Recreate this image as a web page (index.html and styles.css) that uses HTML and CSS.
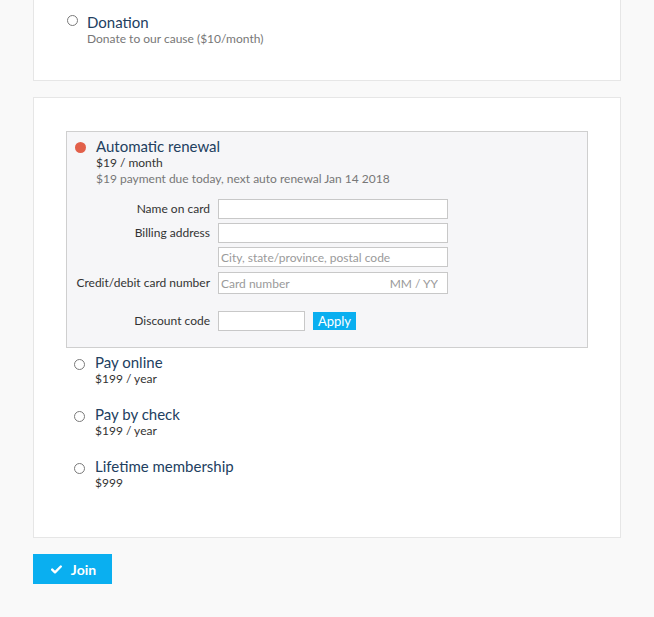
FILE: index.html
```html
<!DOCTYPE html>
<html lang="en">
<head>
<meta charset="utf-8">
<title>Membership</title>
<link rel="stylesheet" href="styles.css">
</head>
<body>
<div class="page">
  <section class="card card-top">
    <div class="option option-donation">
      <span class="radio"></span>
      <div class="option-text">
        <div class="option-title">Donation</div>
        <div class="option-sub">Donate to our cause ($10/month)</div>
      </div>
    </div>
  </section>

  <section class="card card-plans">
    <div class="selected-box">
      <div class="option option-selected">
        <span class="radio radio-on"></span>
        <div class="option-text">
          <div class="option-title">Automatic renewal</div>
          <div class="option-price">$19 / month</div>
          <div class="option-sub">$19 payment due today, next auto renewal Jan 14 2018</div>
        </div>
      </div>
      <div class="pay-form">
        <label class="field-label">Name on card</label>
        <input class="field" type="text">
        <label class="field-label">Billing address</label>
        <input class="field" type="text">
        <span class="field-label"></span>
        <input class="field" type="text" placeholder="City, state/province, postal code">
        <label class="field-label row-card">Credit/debit card number</label>
        <div class="field field-card row-card">
          <input class="card-num" type="text" placeholder="Card number">
          <input class="card-exp" type="text" placeholder="MM / YY">
        </div>
        <label class="field-label row-discount">Discount code</label>
        <div class="discount row-discount">
          <input class="field field-discount" type="text">
          <button class="btn-apply" type="button">Apply</button>
        </div>
      </div>
    </div>

    <div class="option option-plain">
      <span class="radio"></span>
      <div class="option-text">
        <div class="option-title">Pay online</div>
        <div class="option-price">$199 / year</div>
      </div>
    </div>
    <div class="option option-plain">
      <span class="radio"></span>
      <div class="option-text">
        <div class="option-title">Pay by check</div>
        <div class="option-price">$199 / year</div>
      </div>
    </div>
    <div class="option option-plain">
      <span class="radio"></span>
      <div class="option-text">
        <div class="option-title">Lifetime membership</div>
        <div class="option-price">$999</div>
      </div>
    </div>
  </section>

  <button class="btn-join" type="button">
    <svg class="check" width="11" height="9" viewBox="0 0 11 9" aria-hidden="true">
      <path d="M1.2 4.6 L4 7.3 L9.8 1.5" fill="none" stroke="#fff" stroke-width="2.4" stroke-linecap="round" stroke-linejoin="round"/>
    </svg>
    <span>Join</span>
  </button>
</div>
</body>
</html>
```

FILE: styles.css
```css
* { box-sizing: border-box; }

html, body {
  margin: 0;
  background: #f9f9f9;
  font-family: Lato, "Open Sans", Arial, sans-serif;
  color: #333;
}

.page {
  padding-left: 33px;
  width: 621px;
  display: flex;
  flex-direction: column;
  align-items: flex-start;
}

.card {
  width: 588px;
  background: #fff;
  border: 1px solid #e6e6e6;
}

.card-top {
  border-top: none;
  padding: 13px 33px 33px 33px;
}

.card-plans {
  margin-top: 16px;
  padding: 33px 32px 46px 32px;
}

.option {
  display: flex;
  align-items: flex-start;
}

.option-donation { gap: 9px; }

.option-selected,
.option-plain { gap: 10px; }

.option-plain {
  padding-left: 8px;
  margin-top: 18px;
}

.selected-box + .option-plain { margin-top: 5px; }

.radio {
  flex: none;
  width: 11px;
  height: 11px;
  border-radius: 50%;
  border: 1px solid #7a7a7a;
  background: #fff;
  margin-top: 2px;
}

.option-plain .radio { margin-top: 6px; }

.radio-on {
  border: none;
  background: #e2604a;
  margin-top: 5px;
}

.option-title {
  font-size: 15px;
  line-height: 18px;
  color: #22405f;
}

.option-price {
  font-size: 12px;
  line-height: 16px;
  color: #333;
}

.option-sub {
  font-size: 12px;
  line-height: 16px;
  color: #777;
}

.selected-box {
  background: #f6f6f8;
  border: 1px solid #cfcfcf;
  padding: 5px 8px 16px 8px;
}

.pay-form {
  margin-top: 12px;
  display: grid;
  grid-template-columns: 135px 230px;
  column-gap: 8px;
  row-gap: 4px;
  align-items: center;
}

.field-label {
  justify-self: end;
  font-size: 12px;
  color: #333;
  white-space: nowrap;
  padding-bottom: 2px;
}

.field {
  height: 20px;
  width: 100%;
  border: 1px solid #c8c8c8;
  background: #fff;
  padding: 0 2px;
  font-family: inherit;
  font-size: 12px;
  color: #333;
  outline: none;
}

.field::placeholder,
.card-num::placeholder,
.card-exp::placeholder { color: #9a9a9a; opacity: 1; }

.row-card { margin-top: 1px; }

.field-card {
  height: 22px;
  display: flex;
  align-items: center;
  padding: 0 9px 0 2px;
}

.card-num,
.card-exp {
  border: none;
  outline: none;
  background: transparent;
  font-family: inherit;
  font-size: 12px;
  padding: 0;
  min-width: 0;
}

.card-num { flex: 1; }

.card-exp {
  width: 60px;
  text-align: right;
}

.row-discount { margin-top: 13px; }

.discount {
  display: flex;
  align-items: center;
  gap: 8px;
}

.field-discount { width: 87px; }

.btn-apply {
  width: 43px;
  height: 18px;
  padding: 0;
  border: none;
  background: #0aaff0;
  color: #fff;
  font-family: inherit;
  font-size: 13px;
  line-height: 18px;
}

.btn-join {
  margin-top: 16px;
  width: 79px;
  height: 30px;
  border: none;
  background: #0aaff0;
  color: #fff;
  font-family: inherit;
  font-weight: 700;
  font-size: 14px;
  display: flex;
  align-items: center;
  justify-content: center;
  gap: 9px;
  padding: 0 0 0 2px;
}

.check { display: block; }
```
